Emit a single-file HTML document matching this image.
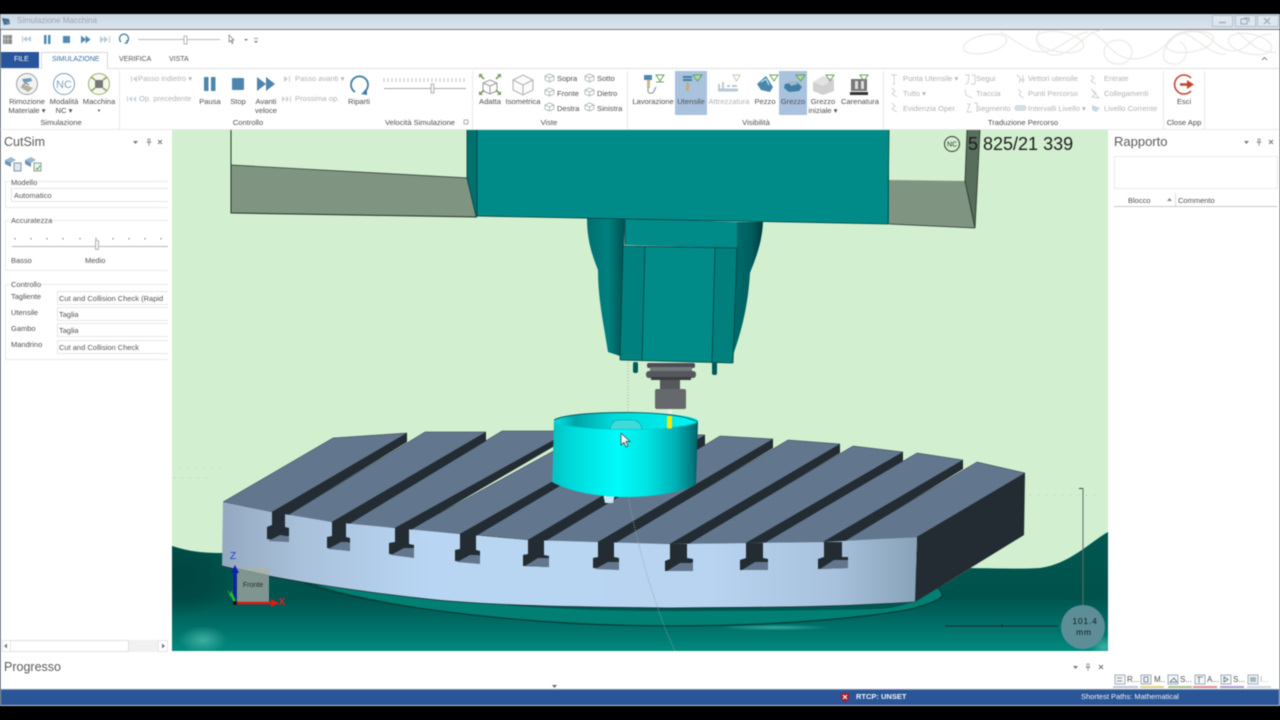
<!DOCTYPE html>
<html><head><meta charset="utf-8"><title>Simulazione Macchina</title>
<style>
html,body{margin:0;padding:0;background:#000;width:1280px;height:720px;overflow:hidden}
#w{position:absolute;left:0;top:0;width:1280px;height:720px;background:#000;overflow:hidden;font-family:"Liberation Sans",sans-serif;font-size:7.6px;color:#505050;filter:blur(.4px)}
.b{position:absolute}
.t{position:absolute;white-space:nowrap;line-height:10px}
.c{position:absolute;white-space:nowrap;line-height:10px;transform:translateX(-50%)}
.d{color:#b2b2b2}
.f{position:absolute;background:#fff;border:1px solid #e6e6e6;box-sizing:border-box;border-right:0;height:14px;line-height:13px;padding-left:1px;color:#555;font-size:7.5px;white-space:nowrap;overflow:hidden}
.h{position:absolute;font-size:12.5px;color:#5a5a5a;line-height:16px;white-space:nowrap}
svg{position:absolute;left:0;top:0;overflow:visible}
</style></head><body><div id="w">

<!-- chrome backgrounds -->
<div class="b" style="left:0;top:14px;width:1280px;height:15px;background:linear-gradient(180deg,#c9d7e4,#dbe4ed)"></div>
<div class="b" style="left:0;top:29px;width:1280px;height:1px;background:#777b80"></div>
<div class="b" style="left:0;top:30px;width:1280px;height:676px;background:#fff"></div>
<div class="b" style="left:0;top:30px;width:1px;height:676px;background:#a5b1bc"></div>
<div class="b" style="left:1279px;top:30px;width:1px;height:676px;background:#d5dde5"></div>
<div class="b" style="left:0;top:68px;width:1280px;height:1px;background:#e0e0e0"></div>
<div class="b" style="left:41px;top:52px;width:67px;height:17px;background:#fff;border:1px solid #d8d8d8;border-bottom:0;box-sizing:border-box"></div>
<div class="b" style="left:0;top:129px;width:1280px;height:1px;background:#e8e8e8"></div>
<div class="b" style="left:1px;top:52px;width:38px;height:16px;background:#27549a"></div>
<div class="b" style="left:1px;top:689px;width:1278px;height:16px;background:#2a5596;border-top:1px solid #6f8aa8;box-sizing:border-box"></div>
<div class="b" style="left:0;top:705px;width:1280px;height:1px;background:#b8c8d8"></div>

<div class="t" style="left:17px;top:16px;color:#9ca6af;font-size:8px">Simulazione Macchina</div>
<div class="t" style="left:14px;top:55px;color:#fff;font-size:7px">FILE</div>
<div class="t" style="left:52px;top:55px;color:#3a6ea8;font-size:7px">SIMULAZIONE</div>
<div class="t" style="left:119px;top:55px;color:#555;font-size:7px">VERIFICA</div>
<div class="t" style="left:169px;top:55px;color:#555;font-size:7px">VISTA</div>

<!-- highlight buttons -->
<div class="b" style="left:675px;top:71px;width:32px;height:44px;background:#a9c2de"></div>
<div class="b" style="left:779px;top:71px;width:28px;height:44px;background:#a9c2de"></div>

<!-- ribbon text -->
<div class="c" style="left:27px;top:97px">Rimozione</div><div class="c" style="left:27px;top:106px">Materiale ▾</div>
<div class="c" style="left:64px;top:97px">Modalità</div><div class="c" style="left:64px;top:106px">NC ▾</div>
<div class="c" style="left:99px;top:97px">Macchina</div><div class="c" style="left:99px;top:106px;font-size:5px">▾</div>
<div class="c" style="left:61px;top:118px">Simulazione</div>
<div class="t d" style="left:138px;top:74px">Passo indietro ▾</div>
<div class="t d" style="left:139px;top:94px">Op. precedente</div>
<div class="t d" style="left:295px;top:74px">Passo avanti ▾</div>
<div class="t d" style="left:295px;top:94px">Prossima op.</div>
<div class="c" style="left:210px;top:97px">Pausa</div>
<div class="c" style="left:238px;top:97px">Stop</div>
<div class="c" style="left:266px;top:97px">Avanti</div><div class="c" style="left:266px;top:106px">veloce</div>
<div class="c" style="left:359px;top:97px">Riparti</div>
<div class="c" style="left:248px;top:118px">Controllo</div>
<div class="c" style="left:420px;top:118px">Velocità Simulazione</div>
<div class="c" style="left:490px;top:97px">Adatta</div>
<div class="c" style="left:523px;top:97px">Isometrica</div>
<div class="t" style="left:557px;top:74px">Sopra</div><div class="t" style="left:557px;top:89px">Fronte</div><div class="t" style="left:557px;top:104px">Destra</div>
<div class="t" style="left:597px;top:74px">Sotto</div><div class="t" style="left:597px;top:89px">Dietro</div><div class="t" style="left:597px;top:104px">Sinistra</div>
<div class="c" style="left:549px;top:118px">Viste</div>
<div class="c" style="left:653px;top:97px">Lavorazione</div>
<div class="c" style="left:691px;top:97px">Utensile</div>
<div class="c d" style="left:729px;top:97px">Attrezzatura</div>
<div class="c" style="left:765px;top:97px">Pezzo</div>
<div class="c" style="left:793px;top:97px">Grezzo</div>
<div class="c" style="left:823px;top:97px">Grezzo</div><div class="c" style="left:823px;top:106px">iniziale ▾</div>
<div class="c" style="left:860px;top:97px">Carenatura</div>
<div class="c" style="left:756px;top:118px">Visibilità</div>
<div class="t d" style="left:903px;top:74px">Punta Utensile ▾</div><div class="t d" style="left:903px;top:89px">Tutto ▾</div><div class="t d" style="left:903px;top:104px">Evidenzia Oper.</div>
<div class="t d" style="left:976px;top:74px">Segui</div><div class="t d" style="left:976px;top:89px">Traccia</div><div class="t d" style="left:976px;top:104px">Segmento</div>
<div class="t d" style="left:1028px;top:74px">Vettori utensile</div><div class="t d" style="left:1028px;top:89px">Punti Percorso</div><div class="t d" style="left:1028px;top:104px">Intervalli Livello ▾</div>
<div class="t d" style="left:1104px;top:74px">Entrate</div><div class="t d" style="left:1104px;top:89px">Collegamenti</div><div class="t d" style="left:1104px;top:104px">Livello Corrente</div>
<div class="c" style="left:1023px;top:118px">Traduzione Percorso</div>
<div class="c" style="left:1184px;top:97px">Esci</div>
<div class="c" style="left:1184px;top:118px">Close App</div>

<!-- chrome icons -->
<svg width="1280" height="720" viewBox="0 0 1280 720" fill="none">
<!-- title icon -->
<path d="M2 18l7 1 1 5-6 1z" fill="#3f6f96"/><path d="M5 21l5 2-2 2z" fill="#7a8a96"/>
<!-- window buttons -->
<g stroke="#b4c0cc" fill="#dde5ed"><rect x="1212.500" y="15.500" width="20" height="11"/><rect x="1235.500" y="15.500" width="20" height="11"/><rect x="1257.500" y="15.500" width="21" height="11"/></g>
<path d="M1219 22.500h7" stroke="#9aa7b3" stroke-width="1.300"/><path d="M1241 19h6v5h-6zM1244 18h5v4" stroke="#9aa7b3"/><path d="M1264 18l6 6M1270 18l-6 6" stroke="#9aa7b3" stroke-width="1.200"/>
<!-- ornament -->
<g stroke="#ecebe8" stroke-width="1.300">
<ellipse cx="985" cy="44" rx="22" ry="9" transform="rotate(-12 985 44)"/>
<ellipse cx="1060" cy="42" rx="24" ry="10" transform="rotate(10 1060 42)"/>
<ellipse cx="1118" cy="52" rx="14" ry="12"/>
<ellipse cx="1190" cy="42" rx="24" ry="10" transform="rotate(-10 1190 42)"/>
<ellipse cx="1250" cy="44" rx="22" ry="10" transform="rotate(12 1250 44)"/>
<path d="M1000 32c14 6 26 20 42 20s30-18 46-20M1040 30c-10 12 6 30 22 24s24-22 40-24"/>
<path d="M1090 32c14 4 20 22 36 26s34-6 44-18 30-12 42 0 24 14 34 6 14-12 26-12"/>
<path d="M1176 36c-14 10-18 26-4 28s20-16 8-22M1238 32c12 12 24 22 38 20M1180 32c20 6 30 24 46 22"/>
</g>
<path d="M1262 60l2.500-2.500 2.500 2.500" stroke="#888"/>

<!-- QAT -->
<rect x="3" y="35" width="9" height="9" fill="#8b8b8b"/><path d="M5 35v9M8 35v9M3 39h9" stroke="#c8c8c8" stroke-width=".8"/>
<g fill="#b7c9d8"><path d="M23 39l4-3v6zM27 39l4-3v6z"/><rect x="22" y="36" width="1" height="6"/></g>
<g fill="#4f8bb0"><rect x="44" y="35" width="2.500" height="9"/><rect x="48" y="35" width="2.500" height="9"/><rect x="63" y="36" width="7" height="7"/><path d="M81 35.500l5 4-5 4zM85.500 35.500l5 4-5 4z"/></g>
<g fill="#b7c9d8"><path d="M100 36l4 3.500-4 3.500zM104 36l4 3.500-4 3.500z"/><rect x="109" y="36" width="1" height="7"/></g>
<path d="M121 42a4.500 4.500 0 1 1 6 0M127 40v3h-2.500" stroke="#3f7fa3" stroke-width="1.300"/>
<path d="M138 39.500h82M179 39.500h4" stroke="#bbb"/><rect x="184" y="36" width="3" height="8" fill="#fff" stroke="#999" stroke-width=".7"/>
<path d="M229 35l5 5h-2l1 3-1 .5-1-3-2 1.500z" fill="#fff" stroke="#777" stroke-width=".7"/>
<path d="M244 39h4l-2 2zM254 39.500h4M254 41h4l-2 2z" fill="#777"/><path d="M254 38.500h4" stroke="#777" stroke-width=".7"/>

<!-- group separators -->
<g stroke="#e8e8e8"><path d="M119.500 71v58M472.500 71v58M627.500 71v58M883.500 71v58M1163.500 71v58M1204.500 71v58"/></g>

<!-- Simulazione icons -->
<circle cx="27" cy="84" r="10.500" fill="#f2f2f2" stroke="#9aa0a4"/>
<path d="M20 87l8 5 5-4-7-3z" fill="#b5b09a"/><path d="M22 79l9-1 1 3-8 2z" fill="#6d9bbd"/><path d="M22 86l4-3 3 2" stroke="#777"/>
<circle cx="64" cy="84" r="10.500" fill="#fff" stroke="#79a0b8"/>
<text x="64" y="88" text-anchor="middle" font-size="11" fill="#7ea3ba" font-family="Liberation Sans">NC</text>
<circle cx="99" cy="84" r="10.500" fill="#f6f8ee" stroke="#9aae78"/>
<rect x="95" y="80" width="8" height="8" fill="#777"/><path d="M91 77l4 3M107 77l-4 3M91 91l4-3M107 91l-4-3" stroke="#8aa35c" stroke-width="1.500"/>

<!-- Controllo icons -->
<g fill="#c3d0da"><path d="M132 76v6h-1v-6zM133 79l4-3v6z"/><path d="M127 96h1v6h-1zM129 99l3-3v6zM133 99l3-3v6z"/></g>
<g fill="#c3d0da"><path d="M284 76l4 3-4 3zM289 76h1v6h-1z"/><path d="M282 96l3 3-3 3zM286 96l3 3-3 3zM290 96h1v6h-1z"/></g>
<g fill="#4c86ad"><rect x="204" y="77" width="4.500" height="14"/><rect x="211" y="77" width="4.500" height="14"/><rect x="232" y="78" width="12" height="12" rx="1"/><path d="M257 77l9 7-9 7zM266 77l9 7-9 7z"/></g>
<path d="M355 92a8.500 8.500 0 1 1 9 0" stroke="#3f80a5" stroke-width="1.800"/><path d="M361 94l6-5v6z" fill="#3f80a5"/>

<!-- speed slider -->
<path d="M384 78v4M388 78v4M392 78v4M396 78v4M400 78v4M404 78v4M408 78v4M412 78v4M416 78v4M420 78v4M424 78v4M428 78v4M432 78v4M436 78v4M440 78v4M444 78v4M448 78v4M452 78v4M456 78v4M460 78v4M464 78v4" stroke="#999" stroke-width=".6"/>
<path d="M384 88.500h82" stroke="#aaa"/><rect x="431" y="84" width="3" height="9" fill="#f4f4f4" stroke="#999" stroke-width=".7"/>
<rect x="464" y="120" width="4" height="4" stroke="#8a8a8a" stroke-width=".7"/>

<!-- Viste icons -->
<g stroke="#9a9a9a" fill="#fdfdfd"><path d="M483 83l7-3 7 3v8l-7 3-7-3z"/><path d="M483 83l7 3 7-3M490 86v8"/></g>
<g stroke="#7f9b62" stroke-width="1.600"><path d="M480 75l4 4M500 75l-4 4M480 94l4-4M500 94l-4-4"/></g>
<path d="M479 74h4l-4 4zM501 74h-4l4 4zM479 95h4l-4-4zM501 95h-4l4-4z" fill="#7f9b62"/>
<g stroke="#b0b0b0" fill="#fbfbfb"><path d="M513 80l10-5 10 5v10l-10 5-10-5z"/><path d="M513 80l10 5 10-5M523 85v10"/></g>
<g stroke="#a6b4b0" fill="#fff" stroke-width=".8"><path d="M545 76l4.500-2 4.500 2v4l-4.500 2-4.500-2zM545 76l4.500 2 4.500-2M549.500 78v4"/><path d="M545 90l4.500-2 4.500 2v4l-4.500 2-4.500-2zM545 90l4.500 2 4.500-2M549.500 92v4"/><path d="M545 105l4.500-2 4.500 2v4l-4.500 2-4.500-2zM545 105l4.500 2 4.500-2M549.500 107v4"/><path d="M585 76l4.500-2 4.500 2v4l-4.500 2-4.500-2zM585 76l4.500 2 4.500-2M589.500 78v4"/><path d="M585 90l4.500-2 4.500 2v4l-4.500 2-4.500-2zM585 90l4.500 2 4.500-2M589.500 92v4"/><path d="M585 105l4.500-2 4.500 2v4l-4.500 2-4.500-2zM585 105l4.500 2 4.500-2M589.500 107v4"/></g>

<!-- Visibilità icons -->
<rect x="644" y="75" width="8" height="5" fill="#4b8aae"/><rect x="647" y="80" width="3" height="8" fill="#c9b98a"/><path d="M648 88v3c0 3 5 3 6 0l2-4" stroke="#7a8a94"/>
<path d="M656 75h8l-4 6z" stroke="#6ba05c"/><path d="M656 82h8" stroke="#6ba05c"/>
<rect x="683" y="76" width="9" height="2" fill="#3f7ea5"/><rect x="683" y="79" width="9" height="2" fill="#3f7ea5"/><rect x="686" y="82" width="3" height="9" fill="#c2ae84"/><path d="M693 75h9l-4.500 6z" stroke="#5fa35a" fill="#b6d6b0"/>
<path d="M718 90h20" stroke="#b9c9d4" stroke-width="3"/><path d="M719 84v5M723 82v7M727 86h3M732 86h5" stroke="#b9cad6" stroke-width="2"/><path d="M733 75h7l-3.500 6z" stroke="#b9d2b0"/>
<path d="M757 84l9-8 7 11-3 5-9-2z" fill="#4b86ad"/><path d="M761 82l5-3 3 6" stroke="#cfe" stroke-width="1"/><path d="M770 75h8l-4 6z" stroke="#6ba05c"/>
<path d="M785 84l12-2 5 5-3 4-10 1-5-4z" fill="#3f7ea5"/><path d="M788 82l7-1 3 3-7 2z" fill="#9fb7c9"/><path d="M796 75h9l-4.500 6z" stroke="#5fa35a" fill="#b6d6b0"/>
<path d="M813 82l10-6 11 3v12l-11 4-10-4z" fill="#d0d0d0"/><path d="M813 82l10 4 11-7-11-3z" fill="#e2e2e2"/><path d="M826 75h8l-4 6z" stroke="#6ba05c"/>
<rect x="851" y="79" width="16" height="12" fill="#777"/><rect x="855" y="81" width="3" height="8" fill="#ddd"/><rect x="861" y="81" width="3" height="8" fill="#ddd"/><rect x="850" y="92" width="18" height="3" fill="#333"/><path d="M860 75h8l-4 6z" stroke="#6ba05c"/>

<!-- Traduzione Percorso icons (faded) -->
<g stroke="#c8d2cf" stroke-width=".9"><path d="M891 75h6M894 75v9M893 84h2"/><path d="M892 88l3 3-3 3 5 3M892 103l3 3-3 3 5 3"/><path d="M965 75h4l-1 8 -3 1M972 75h3v9h-4"/><path d="M965 89l1 6 6 3M967 104h3l-3 8h5M974 103h3v9"/><path d="M1017 75l4 4-2 4M1023 75v8M1019 80h6"/><path d="M1018 89l3 3-2 3 5 3"/><path d="M1091 75l3 3-3 3 5 3M1091 89l5 4-4 4 7 1 -8-9"/></g>
<path d="M1016 105h9l2 3-2 3h-9l-2-3z" fill="#d4dde2"/><path d="M1092 105l8 3-4 4-4-2z" fill="#c8d6de"/>

<!-- Esci -->
<path d="M1191 78a9.500 9.500 0 1 0 0 13" stroke="#c2462f" stroke-width="1.600"/><path d="M1180 84.500h8" stroke="#c2462f" stroke-width="2.500"/><path d="M1187 80l7 4.500-7 4.500z" fill="#c2462f"/>

<!-- left panel icons -->
<g><path d="M5 160l6-3 5 3-5 3z" fill="#9db9d2"/><path d="M5 160v4l6 3v-4z" fill="#6f93b3"/><rect x="14" y="163" width="7" height="8" fill="#dfe7ed" stroke="#5e7f98" stroke-width=".8"/>
<path d="M25 160l6-3 5 3-5 3z" fill="#9db9d2"/><path d="M25 160v4l6 3v-4z" fill="#6f93b3"/><rect x="34" y="163" width="7" height="8" fill="#eef3ee" stroke="#6b8a78" stroke-width=".8"/><path d="M36 168l1.500 1.500 2.500-4" stroke="#4f9a4f" stroke-width=".9"/></g>
<path d="M133 141h5l-2.500 3z" fill="#777"/><path d="M148 139h2v3h-2zM146.500 142.500h5M149 143v3" stroke="#888" stroke-width=".8"/><path d="M158 140l4 4M162 140l-4 4" stroke="#777"/>
<path d="M1244 141h5l-2.500 3z" fill="#777"/><path d="M1258 139h2v3h-2zM1256.500 142.500h5M1259 143v3" stroke="#888" stroke-width=".8"/><path d="M1269 140l4 4M1273 140l-4 4" stroke="#777"/>
<path d="M1073 666h5l-2.500 3z" fill="#777"/><path d="M1087 664h2v3h-2zM1085.500 667.500h5M1088 668v3" stroke="#888" stroke-width=".8"/><path d="M1099 665l4 4M1103 665l-4 4" stroke="#777"/>
<path d="M552 685h5l-2.500 3z" fill="#666"/>
<!-- group boxes -->
<g stroke="#e8e8e8"><path d="M10 181.500H5.500V207.500H168M36 181.500H168"/><path d="M10 220.500H5.500V270.500H168M51 220.500H168"/><path d="M10 284.500H5.500V359.500H168M40 284.500H168"/></g>
<path d="M15 238v1.500M31 238v1.500M47 238v1.500M63 238v1.500M80 238v1.500M96 238v1.500M113 238v1.500M129 238v1.500M145 238v1.500M161 238v1.500" stroke="#777"/>
<path d="M12 246.500h156" stroke="#bbb"/><rect x="95.500" y="240.500" width="3" height="9" fill="#f5f5f5" stroke="#999" stroke-width=".7"/>
<!-- scrollbar -->
<rect x="2" y="640" width="166" height="12" fill="#f1f1f1"/><rect x="10.500" y="640.500" width="118" height="11" fill="#fff" stroke="#e0e0e0"/>
<rect x="2.500" y="640.500" width="8" height="11" fill="#fff" stroke="#e6e6e6"/><rect x="158.500" y="640.500" width="9" height="11" fill="#fff" stroke="#e6e6e6"/>
<path d="M7 643.500v5l-3-2.500zM162 643.500v5l3-2.500z" fill="#777"/>
<!-- rapporto -->
<rect x="1114.500" y="156.500" width="163" height="32" fill="#fff" stroke="#ececec"/>
<path d="M1114 206.500h163" stroke="#c8c8c8"/><path d="M1175.500 193v13" stroke="#ddd"/><path d="M1167 201l2.500-3 2.500 3z" fill="#888"/>
<!-- bottom tabs -->
<g stroke="#8a9aa6" fill="#f6f6f6" stroke-width=".8"><rect x="1115" y="675" width="10" height="9"/><rect x="1141" y="675" width="10" height="9"/><rect x="1168" y="675" width="10" height="9"/><rect x="1195" y="675" width="10" height="9"/><rect x="1221" y="675" width="10" height="9"/><rect x="1248" y="675" width="10" height="9"/></g>
<path d="M1117 678h5M1117 681h5M1144 677h4v5h-4zM1170 682h7l-3-4zM1197 677h6M1199 677v6M1224 677l4 2.500-4 2.500z" stroke="#55707f" stroke-width=".8"/>
<rect x="1250" y="677" width="6" height="5" fill="#9fb7c9"/>
<rect x="1113" y="686" width="25" height="2" fill="#b9c6d8"/><rect x="1140" y="686" width="24" height="2" fill="#e3cf7c"/><rect x="1168" y="686" width="24" height="2" fill="#a9c08a"/><rect x="1193" y="686" width="24" height="2" fill="#dc8f8f"/><rect x="1220" y="686" width="24" height="2" fill="#b39ad0"/><rect x="1247" y="686" width="24" height="2" fill="#c9d6e6"/>
<!-- status shield -->
<path d="M841 693h8v6l-4 3.500-4-3.500z" fill="#a41c2c"/><path d="M843 695l4 4M847 695l-4 4" stroke="#fff" stroke-width="1.100"/>
</svg>

<!-- left panel text -->
<div class="h" style="left:4px;top:134px">CutSim</div>
<div class="t" style="left:11px;top:178px;background:#fff;padding-right:1px;font-size:7.5px">Modello</div>
<div class="f" style="left:11px;top:188px;width:157px;padding-left:2px">Automatico</div>
<div class="t" style="left:11px;top:216px;background:#fff;font-size:7.5px">Accuratezza</div>
<div class="t" style="left:11px;top:256px;font-size:7.5px">Basso</div>
<div class="t" style="left:85px;top:256px;font-size:7.5px">Medio</div>
<div class="t" style="left:11px;top:280px;background:#fff;font-size:7.5px">Controllo</div>
<div class="t" style="left:11px;top:292px;font-size:7.5px">Tagliente</div>
<div class="t" style="left:11px;top:308px;font-size:7.5px">Utensile</div>
<div class="t" style="left:11px;top:324px;font-size:7.5px">Gambo</div>
<div class="t" style="left:11px;top:340px;font-size:7.5px">Mandrino</div>
<div class="f" style="left:57px;top:291px;width:111px">Cut and Collision Check (Rapid</div>
<div class="f" style="left:57px;top:307px;width:111px">Taglia</div>
<div class="f" style="left:57px;top:323px;width:111px">Taglia</div>
<div class="f" style="left:57px;top:340px;width:111px">Cut and Collision Check</div>

<!-- right panel text -->
<div class="h" style="left:1114px;top:134px;font-size:13px">Rapporto</div>
<div class="t" style="left:1128px;top:196px;font-size:7.5px">Blocco</div>
<div class="t" style="left:1178px;top:196px;font-size:7.5px">Commento</div>
<div class="t" style="left:1127px;top:675px;font-size:8px">R...</div>
<div class="t" style="left:1154px;top:675px;font-size:8px">M..</div>
<div class="t" style="left:1180px;top:675px;font-size:8px">S...</div>
<div class="t" style="left:1207px;top:675px;font-size:8px">A...</div>
<div class="t" style="left:1233px;top:675px;font-size:8px">S...</div>
<div class="t d" style="left:1260px;top:675px;font-size:8px">I...</div>

<div class="h" style="left:4px;top:659px">Progresso</div>
<div class="t" style="left:856px;top:692px;color:#f0f4f8;font-size:7.5px;font-weight:bold">RTCP: UNSET</div>
<div class="t" style="left:1081px;top:692px;color:#f0f4f8;font-size:7.5px">Shortest Paths: Mathematical</div>

<!-- 3D scene -->
<svg width="1280" height="720" viewBox="0 0 1280 720" fill="none" font-family="Liberation Sans">
<defs>
<clipPath id="sc"><rect x="172" y="130" width="936" height="521"/></clipPath>
<linearGradient id="g1" gradientUnits="userSpaceOnUse" x1="0" y1="532" x2="0" y2="651"><stop offset="0" stop-color="#00574f"/><stop offset=".55" stop-color="#00534d"/><stop offset=".75" stop-color="#006a63"/><stop offset="1" stop-color="#008a7e"/></linearGradient>
<radialGradient id="gs"><stop offset="0" stop-color="#003d3a" stop-opacity=".65"/><stop offset=".6" stop-color="#003d3a" stop-opacity=".4"/><stop offset="1" stop-color="#003d3a" stop-opacity="0"/></radialGradient>
<linearGradient id="fr" x1="0" y1="0" x2="1" y2="0"><stop offset="0" stop-color="#94a9c0"/><stop offset=".12" stop-color="#aac2dc"/><stop offset=".3" stop-color="#b8d6f3"/><stop offset=".7" stop-color="#b8d4f0"/><stop offset=".88" stop-color="#a8c2dd"/><stop offset="1" stop-color="#88a2b8"/></linearGradient>
<linearGradient id="cy" x1="0" y1="0" x2="1" y2="0"><stop offset="0" stop-color="#08c0c0"/><stop offset=".12" stop-color="#00d8d8"/><stop offset=".45" stop-color="#00fbfb"/><stop offset=".65" stop-color="#00e4e4"/><stop offset=".85" stop-color="#00b0b4"/><stop offset=".96" stop-color="#007a80"/><stop offset="1" stop-color="#005a62"/></linearGradient>
<linearGradient id="ci" x1="0" y1="0" x2="1" y2="0"><stop offset="0" stop-color="#00e6e6"/><stop offset=".15" stop-color="#00a4a8"/><stop offset=".4" stop-color="#00d8d8"/><stop offset="1" stop-color="#00f4f4"/></linearGradient>
<linearGradient id="ds" x1="0" y1="0" x2="1" y2="0"><stop offset="0" stop-color="#00706f"/><stop offset=".55" stop-color="#008080"/><stop offset="1" stop-color="#004f50"/></linearGradient>
<linearGradient id="dr" x1="0" y1="0" x2="1" y2="0"><stop offset="0" stop-color="#006a6a"/><stop offset=".6" stop-color="#005f60"/><stop offset="1" stop-color="#003b3d"/></linearGradient>
<radialGradient id="gl"><stop offset="0" stop-color="#4fb9ac" stop-opacity=".8"/><stop offset="1" stop-color="#4fb9ac" stop-opacity="0"/></radialGradient>
<radialGradient id="gl2"><stop offset="0" stop-color="#35b0a4" stop-opacity=".95"/><stop offset="1" stop-color="#35b0a4" stop-opacity="0"/></radialGradient>
<clipPath id="gc"><path d="M172 546C190 552 205 553 222 553L915 570C960 566 1010 570 1040 568C1070 564 1090 542 1108 532V651H172Z"/></clipPath>
</defs>
<g clip-path="url(#sc)">
<rect x="172" y="130" width="936" height="521" fill="#d2efd0"/>
<!-- ground -->
<path d="M172 546C190 552 205 553 222 553L915 570C960 566 1010 570 1040 568C1070 564 1090 542 1108 532V651H172Z" fill="url(#g1)"/>
<g clip-path="url(#gc)"><ellipse cx="180" cy="575" rx="55" ry="42" fill="url(#gs)"/></g>
<ellipse cx="203" cy="640" rx="24" ry="14" fill="url(#gl)"/>
<ellipse cx="1104" cy="647" rx="14" ry="12" fill="url(#gl)"/>
<!-- under table band -->
<path d="M300 578C345 600 500 626 670 626C780 626 880 614 907 610C930 604 945 598 942 594C940 588 930 584 915 580L300 565Z" fill="#007f72"/>
<path d="M305 583C345 600 500 626 670 626C780 626 860 618 907 610C930 604 945 598 942 594C941 590 938 588 936 587" stroke="#003c3a" stroke-width="1.200"/>
<path d="M300 578C400 600 560 612 670 611C760 611 850 610 880 609C895 608 915 604 930 590L915 590L600 590Z" fill="#005751"/>
<ellipse cx="775" cy="627.500" rx="55" ry="3" fill="url(#gl2)"/>
<path d="M915 602L972 568L958 568L925 590Z" fill="#3e5d5a"/>

<!-- side gray blocks -->
<path d="M231 165L468 178L477 217L231 213Z" fill="#7f9582"/>
<path d="M231 130V213L477 217" stroke="#26312a"/>
<path d="M231 165L468 178" stroke="#26312a" stroke-width=".7"/>
<path d="M889 180L965 181L975 228L889 224Z" fill="#7f9582"/>
<path d="M967 130L980 130L975 228L965 181Z" fill="#586e5c"/>
<path d="M967 130L965 181L975 228L980 130" stroke="#26312a" stroke-width=".8"/>
<path d="M889 224L975 228" stroke="#26312a" stroke-width=".8"/>

<!-- spindle -->
<path d="M587 218C587 240 592 255 598 270C598 300 604 325 608 352L620 356L625 218Z" fill="url(#ds)"/>
<path d="M737 222H763C762 245 754 262 750 273C748 305 742 330 733 355L735 250Z" fill="url(#dr)"/>
<path d="M625 218L737 222V248L625 245Z" fill="#008a88"/>
<path d="M623 246L737 248L733 363L620 360Z" fill="#008a88"/>
<path d="M623 246L645 247L642 360L620 360Z" fill="#00807e"/>
<path d="M715 248L737 248L733 363L712 363Z" fill="#007f7d"/>
<path d="M623 246L737 248M645 247L642 360M715 248L712 363M620 360L733 363M623 246L620 360M737 248L733 363M625 218V245" stroke="#00413f" stroke-width=".8"/>
<!-- big block -->
<path d="M467 130H477V217L476 216L467 178Z" fill="#00716f"/>
<path d="M477 130H889V224L477 216Z" fill="#008b89"/>
<path d="M467 130L467 178L476 216L888 224L889 130M477 130V216" stroke="#00403f" stroke-width=".8"/>
<!-- pins -->
<rect x="633" y="362" width="5" height="11" rx="2" fill="#005a58"/><rect x="712" y="362" width="5" height="13" rx="2" fill="#005a58"/>
<!-- holder -->
<rect x="647" y="363" width="48" height="5" rx="2" fill="#4a4e52"/>
<rect x="650" y="367" width="42" height="4" fill="#73787c"/>
<rect x="646" y="371" width="50" height="7" rx="3" fill="#54585c"/>
<rect x="651" y="377" width="40" height="3" fill="#3a3e41"/>
<rect x="660" y="380" width="20" height="10" fill="#55595c"/>
<rect x="655" y="389" width="31" height="20" rx="2" fill="#66696c"/>
<rect x="668" y="409" width="4" height="8" fill="#eee"/>

<!-- dotted helpers -->
<path d="M628 362V412" stroke="#99b6a8" stroke-dasharray="1 2"/>
<path d="M180 468h45M174 478h40M990 495h110" stroke="#b7c7b5" stroke-dasharray="1 7"/>
<path d="M1000 495h24" stroke="#c0a0a0" stroke-dasharray="2 3"/>

<!-- table top surfaces -->
<g fill="#62778e" stroke="#2a3440" stroke-width=".5">
<path d="M223 502L333 438L407 433L272 512Z"/>
<path d="M285 517L425 432L486 432L332 522Z"/>
<path d="M346 525L502 431L570 431L395 528Z"/>
<path d="M409 530L590 431L640 432L460 534Z"/>
<path d="M476 535L650 433L705 435L528 540Z"/>
<path d="M544 541L720 436L773 439L598 542Z"/>
<path d="M614 543L788 440L840 444L670 544Z"/>
<path d="M687 544L853 446L903 452L746 543Z"/>
<path d="M763 543L917 453L963 460L823 542Z"/>
<path d="M842 542L977 462L1025 473L917 537Z"/>
</g>
<!-- slot walls -->
<g fill="#232c33">
<path d="M272 512L407 433V442L285 517Z"/>
<path d="M332 522L486 432V441L346 526Z"/>
<path d="M395 528L570 431L570 437L409 531Z"/>
<path d="M460 534L640 432L640 438L476 536Z"/>
<path d="M528 540L705 435L705 445L544 542Z"/>
<path d="M598 542L773 439L773 448L614 544Z"/>
<path d="M670 544L840 444L840 453L687 545Z"/>
<path d="M746 543L903 452L903 461L763 544Z"/>
<path d="M823 542L963 460L963 469L842 543Z"/>
</g>
<!-- side -->
<path d="M917 537L1025 473L1024 535L915 602Z" fill="#232c33"/>
<!-- front face -->
<path d="M223 502L272 512L332 522L395 528L460 534L528 540L598 542L670 544L746 543L823 542L917 537L915 602C820 608 760 607 670 608C580 607 500 606 437 600C360 592 280 580 222 566Z" fill="url(#fr)"/>
<!-- T slots -->
<g fill="#232c33">
<path d="M272 512h13v15l4 1v14l-22-3v-12l5-2z"/>
<path d="M332 522h14v15l4 1v13l-23-3v-11l5-1z"/>
<path d="M395 528h14v16l5 1v12l-25-3v-11l6-1z"/>
<path d="M460 534h16v16l4 1v12l-25-2v-11l5-1z"/>
<path d="M528 540h16v15l5 1v11l-26-1v-11l5-1z"/>
<path d="M598 542h16v15l5 1v11l-26-1v-10l5-1z"/>
<path d="M670 544h17v14l6 1v12h-28v-10l5-2z"/>
<path d="M746 543h17v15l5 1v11h-28v-10l6-2z"/>
<path d="M824 542h18v15l6 0v11l-30 1v-10l6-2z"/>
</g>
<g fill="#62778e">
<path d="M268 541l12-6 6 1h3v6z"/><path d="M328 549l13-7h7l2 1v8z"/><path d="M391 555l13-7h8l2 0v10z"/><path d="M457 562l13-7h8l2 1v8z"/><path d="M525 566l13-8h9l2 0v9z"/><path d="M595 569l13-7h9l2 0v8z"/><path d="M667 571l13-8h11l2-1v9z"/><path d="M742 570l13-8h11l2 0v8z"/><path d="M820 569l14-9h12l2 0v8z"/>
</g>
<path d="M222 566C280 580 360 592 437 600C500 606 580 607 670 608C760 607 820 608 915 602" stroke="#1e2a30" stroke-width=".8"/>
<!-- dotted helper over table -->
<path d="M628 495C640 560 660 620 675 651" stroke="#8ea0a0" stroke-dasharray="1 1.500"/>

<!-- cylinder -->
<path d="M603 494h12l-2 9h-8z" fill="#cfe4f4"/>
<path d="M554 420C553 450 553 470 552 482C570 492 600 497 625 497C650 497 675 494 696 485L698 422Z" fill="url(#cy)"/>
<ellipse cx="626" cy="421" rx="72" ry="8.500" fill="url(#ci)"/>
<path d="M554 420C565 414 600 412.500 626 412.500C655 412.500 685 415 698 422" stroke="#00605f" stroke-width=".9"/>
<path d="M554 421C570 428 600 429.500 626 429.500C650 429.500 680 428 698 422" stroke="#00c8c8" stroke-width=".6"/>
<path d="M610 429c1-7 5-9 11-9h10c6 0 10 3 11 9z" fill="#3fdada"/>
<path d="M610 429c1-7 5-9 11-9h10c6 0 10 3 11 9" stroke="#00a4a8" stroke-width=".6"/>
<rect x="667" y="416" width="5" height="12.500" fill="#f2e812"/>
<!-- cursor -->
<path d="M621 433V445L624 442.500L626 447L628 446L626 441.500H630Z" fill="#f4f4f4" stroke="#333" stroke-width=".7"/>

<!-- scale -->
<path d="M1079 488.500H1083V604" stroke="#3a4a42"/>
<path d="M1083 488V605" stroke="#6f7f74" stroke-width=".7"/>
<path d="M945 626H1058M1002 624v3" stroke="#1a2c2a"/>
<circle cx="1083" cy="627" r="22" fill="#5d8e98"/>
<text x="1085" y="624" text-anchor="middle" font-size="8.500" letter-spacing=".8" fill="#101a1e">101.4</text>
<text x="1084" y="635" text-anchor="middle" font-size="8.500" letter-spacing=".8" fill="#101a1e">mm</text>

<!-- NC counter -->
<circle cx="952" cy="144" r="7.500" stroke="#333" fill="none"/>
<text x="952" y="146.500" text-anchor="middle" font-size="7" fill="#333">NC</text>
<text x="968" y="150" font-size="18" fill="#1c1c1c">5 825/21 339</text>

<!-- gizmo -->
<rect x="237" y="568" width="32" height="34" fill="#80958f"/>
<path d="M237 568H269V575L251 571Z" fill="#a8b3ac"/>
<text x="253" y="587" text-anchor="middle" font-size="7" fill="#25302c">Fronte</text>
<path d="M235 602V572" stroke="#0f1fb0" stroke-width="3"/><path d="M231 573L235 565L239 573Z" fill="#0f1fb0"/>
<path d="M235 603H274" stroke="#e01818" stroke-width="2.500"/><path d="M271 599L279 603L271 607Z" fill="#e01818"/>
<path d="M235 602L231 593" stroke="#28c428" stroke-width="2.500"/>
<circle cx="235" cy="603" r="2" fill="#111"/>
<text x="233" y="559" text-anchor="middle" font-size="10" fill="#1f3ad0">Z</text>
<text x="282" y="605" text-anchor="middle" font-size="10" font-weight="bold" fill="#e02020">X</text>
<text x="230" y="597" text-anchor="middle" font-size="9" fill="#30b030">Y</text>
</g>
</svg>

</div></body></html>
